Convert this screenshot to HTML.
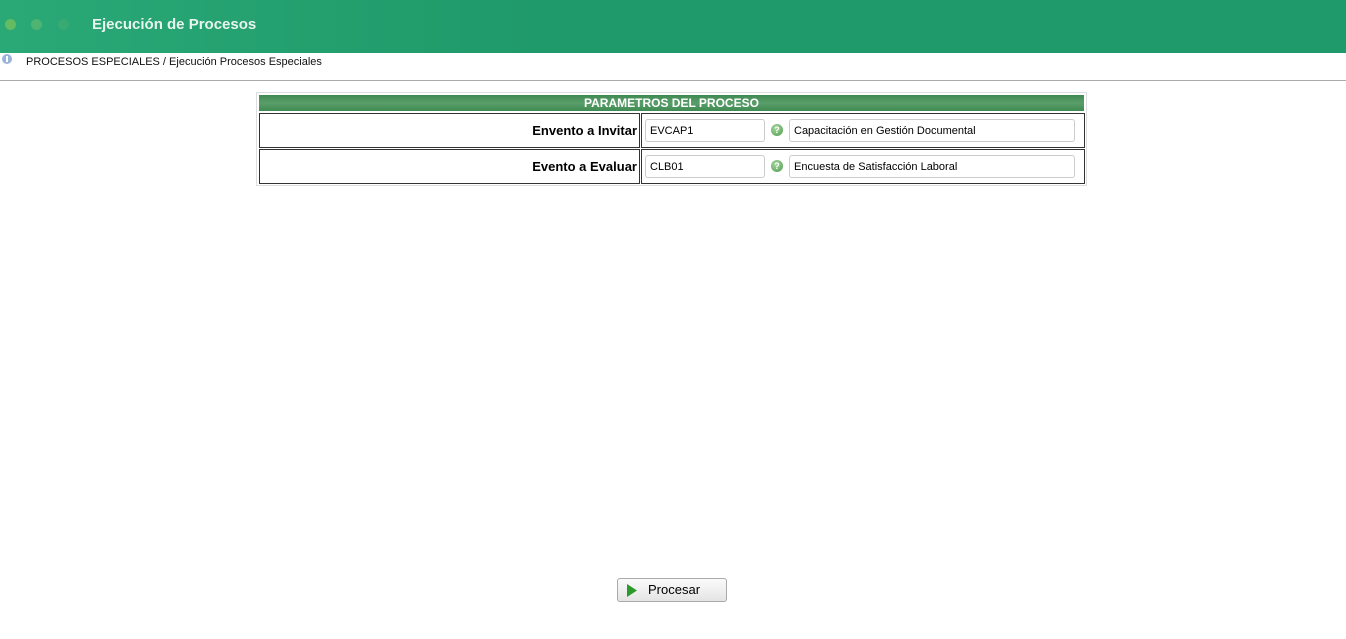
<!DOCTYPE html>
<html><head><meta charset="utf-8"><style>
body{margin:0;width:1346px;height:639px;background:#fff;font-family:"Liberation Sans",sans-serif;position:relative;overflow:hidden}
.hdr{position:absolute;left:0;top:0;width:1346px;height:53px;background:linear-gradient(90deg,#2aa876 0%,#1f9a6a 40%,#1f9a6a 100%)}
.dot{position:absolute;top:19px;width:11px;height:11px;border-radius:50%}
.ttl{position:absolute;left:92px;top:16px;font-weight:bold;font-size:15px;color:#e8f5ee}
.bc{position:absolute;left:26px;top:56px;font-size:11px;color:#111}
.line{position:absolute;left:0;top:80px;width:1346px;height:1px;background:#aaa}
.frame{position:absolute;left:256px;top:92px;width:829px;height:92px;border:1px solid #ddd}
.th{position:absolute;left:259px;top:95px;width:825px;height:16px;background:linear-gradient(#3f8a52,#5a9e6a 50%,#3f8a52);color:#fff;font-weight:bold;font-size:12px;text-align:center;line-height:16px}
.cell{position:absolute;border:1px solid #333;box-sizing:border-box}
.lbl{font-weight:bold;font-size:13px;text-align:right;padding-right:2px;line-height:33px;color:#000}
.inp{position:absolute;height:23px;border:1px solid #ccc;border-radius:3px;box-sizing:border-box;font-size:11px;line-height:22px;padding-left:4px;color:#000}
.q{position:absolute;width:12px;height:12px;border-radius:50%;background:radial-gradient(circle at 40% 35%,#a8d8a0,#4c9a4c);color:#fff;font-size:9px;font-weight:bold;text-align:center;line-height:12px}
.btn{position:absolute;left:617px;top:578px;width:110px;height:24px;border:1px solid #aaa;border-radius:3px;background:linear-gradient(#fbfbfb,#e4e4e4);box-sizing:border-box;font-size:13px;line-height:22px}
</style></head><body>
<div class="hdr">
<div class="dot" style="left:5px;background:#7dc35a;opacity:.7"></div>
<div class="dot" style="left:31px;background:#6cc070;opacity:.55"></div>
<div class="dot" style="left:58px;background:#50b070;opacity:.4"></div>
<div class="ttl">Ejecución de Procesos</div>
</div>
<svg style="position:absolute;left:1px;top:54px" width="12" height="12"><circle cx="6" cy="5" r="5" fill="#9ab4d8"/><rect x="5" y="2" width="2" height="6" fill="#fff"/></svg>
<div class="bc">PROCESOS ESPECIALES / Ejecución Procesos Especiales</div>
<div class="line"></div>
<div class="frame"></div>
<div class="th">PARAMETROS DEL PROCESO</div>
<div class="cell lbl" style="left:259px;top:113px;width:381px;height:35px">Envento a Invitar</div>
<div class="cell" style="left:641px;top:113px;width:444px;height:35px"></div>
<div class="cell lbl" style="left:259px;top:149px;width:381px;height:35px">Evento a Evaluar</div>
<div class="cell" style="left:641px;top:149px;width:444px;height:35px"></div>
<div class="inp" style="left:645px;top:119px;width:120px">EVCAP1</div>
<div class="q" style="left:771px;top:124px">?</div>
<div class="inp" style="left:789px;top:119px;width:286px">Capacitación en Gestión Documental</div>
<div class="inp" style="left:645px;top:155px;width:120px">CLB01</div>
<div class="q" style="left:771px;top:160px">?</div>
<div class="inp" style="left:789px;top:155px;width:286px">Encuesta de Satisfacción Laboral</div>
<div class="btn"><svg style="position:absolute;left:9px;top:5px" width="10" height="13"><polygon points="0,0 10,6.5 0,13" fill="#2a9a2a"/></svg><span style="position:absolute;left:30px">Procesar</span></div>
</body></html>
